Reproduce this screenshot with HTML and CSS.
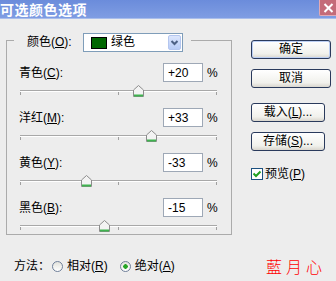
FILE: index.html
```html
<!DOCTYPE html>
<html lang="zh-CN">
<head>
  <meta charset="UTF-8">
  <meta name="viewport" content="width=device-width, initial-scale=1.0">
  <title>可选颜色选项</title>
  <link rel="stylesheet" href="styles.css">
</head>
<body>

  <div class="window">
    <div class="titlebar">
      <span class="title">可选颜色选项</span>
      <span class="close">
        <svg width="15" height="14" viewBox="0 0 15 14"><path d="M3.5 3 L11.5 11 M11.5 3 L3.5 11" stroke="#fff" stroke-width="2"/></svg>
      </span>
    </div>

    <div class="main">
      <!-- 颜色分组 -->
      <fieldset class="group">
        <legend class="group-head">
          <span class="head-label">颜色(<u>O</u>):</span>
          <div class="combo">
            <span class="swatch"></span>
            <span class="combo-text">绿色</span>
            <span class="combo-btn">
              <svg width="11" height="13" viewBox="0 0 11 13"><path d="M2.5 5 L5.5 8 L8.5 5" fill="none" stroke="#4d6185" stroke-width="2"/></svg>
            </span>
          </div>
        </legend>

        <div class="rows">
          <div class="row">
            <div class="line"><span class="name">青色(<u>C</u>):</span><input class="val" type="text" value="+20"><span class="pct">%</span></div>
            <div class="slider">
              <div class="track"></div><div class="ticks"></div>
              <span class="thumb" style="left: 60%"><svg width="11" height="12" viewBox="0 0 11 12"><path d="M0.5 11.5 V5 L5.5 0.5 L10.5 5 V11.5 Z" fill="#f3f3f3" stroke="#8c8c8c"/><path d="M1 10.5 H10" stroke="#3fb34f" stroke-width="2"/></svg></span>
            </div>
          </div>
          <div class="row">
            <div class="line"><span class="name">洋红(<u>M</u>):</span><input class="val" type="text" value="+33"><span class="pct">%</span></div>
            <div class="slider">
              <div class="track"></div><div class="ticks"></div>
              <span class="thumb" style="left: 66.5%"><svg width="11" height="12" viewBox="0 0 11 12"><path d="M0.5 11.5 V5 L5.5 0.5 L10.5 5 V11.5 Z" fill="#f3f3f3" stroke="#8c8c8c"/><path d="M1 10.5 H10" stroke="#3fb34f" stroke-width="2"/></svg></span>
            </div>
          </div>
          <div class="row">
            <div class="line"><span class="name">黄色(<u>Y</u>):</span><input class="val" type="text" value="-33"><span class="pct">%</span></div>
            <div class="slider">
              <div class="track"></div><div class="ticks"></div>
              <span class="thumb" style="left: 33.5%"><svg width="11" height="12" viewBox="0 0 11 12"><path d="M0.5 11.5 V5 L5.5 0.5 L10.5 5 V11.5 Z" fill="#f3f3f3" stroke="#8c8c8c"/><path d="M1 10.5 H10" stroke="#3fb34f" stroke-width="2"/></svg></span>
            </div>
          </div>
          <div class="row">
            <div class="line"><span class="name">黑色(<u>B</u>):</span><input class="val" type="text" value="-15"><span class="pct">%</span></div>
            <div class="slider">
              <div class="track"></div><div class="ticks"></div>
              <span class="thumb" style="left: 42.5%"><svg width="11" height="12" viewBox="0 0 11 12"><path d="M0.5 11.5 V5 L5.5 0.5 L10.5 5 V11.5 Z" fill="#f3f3f3" stroke="#8c8c8c"/><path d="M1 10.5 H10" stroke="#3fb34f" stroke-width="2"/></svg></span>
            </div>
          </div>
        </div>
      </fieldset>

      <!-- 按钮 -->
      <div class="side">
        <button class="btn default">确定</button>
        <button class="btn cancel">取消</button>
        <button class="btn small">载入(<u>L</u>)...</button>
        <button class="btn small store">存储(<u>S</u>)...</button>
        <label class="preview">
          <span class="check"><svg width="10" height="10" viewBox="0 0 10 10"><path d="M1.5 4.5 L4 7 L8.5 2.5" fill="none" stroke="#21a121" stroke-width="2"/></svg></span>
          <span>预览(<u>P</u>)</span>
        </label>
      </div>
    </div>

    <!-- 方法 -->
    <div class="method">
      <span class="method-label">方法：</span>
      <span class="opt"><span class="radio"></span><span>相对(<u>R</u>)</span></span>
      <span class="opt second"><span class="radio on"></span><span>绝对(<u>A</u>)</span></span>
      <span class="sign">藍月心</span>
    </div>
  </div>

</body>
</html>
```

FILE: styles.css
```css
* {
  box-sizing: border-box;
}

body {
  margin: 0;
  background: #ededed;
  font-family: "Liberation Sans", "Noto Sans CJK SC", sans-serif;
  font-size: 12px;
  line-height: 16px;
  color: #000;
}

u {
  text-underline-offset: 1px;
}

.window {
  width: 336px;
  height: 281px;
  overflow: hidden;
  display: flex;
  flex-direction: column;
}

.titlebar {
  height: 19px;
  display: flex;
  justify-content: space-between;
  background: linear-gradient(#6b8cdb, #7f9de3);
  border-bottom: 1px solid #a9bdeb;
}

.title {
  margin-left: 0;
  color: #fff;
  font-family: "Noto Sans CJK SC", sans-serif;
  font-size: 14px;
  font-weight: bold;
  line-height: 18px;
  letter-spacing: 0.5px;
}

.close {
  width: 17px;
  height: 16px;
  display: flex;
  align-items: center;
  justify-content: center;
  background: #c46b79;
  border: 1px solid #e2aab4;
  border-top: none;
  border-right: none;
  border-radius: 0 0 0 2px;
}

.main {
  display: flex;
  padding: 14px 0 0 6px;
}

/* group box */
.group {
  margin: 0;
  width: 226px;
  min-width: 0;
  padding: 15px 12px 0 12px;
  border: 1px solid #ababab;
}

.group-head {
  display: flex;
  align-items: flex-start;
  height: 15px;
  margin-left: -5px;
  padding: 0 8px 0 13px;
}

.head-label {
  width: 56px;
  line-height: 19px;
}

.combo {
  width: 100px;
  height: 19px;
  display: flex;
  align-items: center;
  background: #fff;
  border: 1px solid #7f9db9;
}

.swatch {
  width: 16px;
  height: 12px;
  margin-left: 7px;
  background: #006600;
  border: 1px solid #000;
}

.combo-text {
  margin-left: 4px;
  line-height: 17px;
}

.combo-btn {
  width: 13px;
  height: 15px;
  margin-left: auto;
  margin-right: 1px;
  display: flex;
  align-items: center;
  justify-content: center;
  background: linear-gradient(#dce6fd, #b8ccf6);
  border: 1px solid #b4c6ef;
  border-radius: 2px;
}

.rows {
  display: flex;
  flex-direction: column;
  gap: 9px;
}

.line {
  height: 19px;
  display: flex;
  align-items: center;
}

.name {
  flex: 1;
}

.val {
  width: 40px;
  height: 19px;
  margin: 0;
  padding: 0 0 0 4px;
  border: 1px solid #9ea8b6;
  background: #fff;
  font: inherit;
  color: #000;
}

.pct {
  margin-left: 4px;
  width: 12px;
}

/* slider */
.slider {
  position: relative;
  width: 197px;
  height: 17px;
  margin-left: 1px;
  padding-top: 8px;
}

.track {
  height: 2px;
  border-top: 1px solid #a8a8a8;
  border-bottom: 1px solid #fff;
}

.ticks {
  height: 3px;
  background:
    linear-gradient(#a0a0a0, #a0a0a0) 0 0 / 1px 100% no-repeat,
    linear-gradient(#a0a0a0, #a0a0a0) 50% 0 / 1px 100% no-repeat,
    linear-gradient(#a0a0a0, #a0a0a0) 100% 0 / 1px 100% no-repeat;
}

.thumb {
  position: absolute;
  top: 3px;
  width: 11px;
  height: 12px;
  margin-left: -5px;
  display: block;
}

.thumb svg {
  display: block;
}

/* buttons */
.side {
  margin-left: 19px;
  padding-top: 7px;
  display: flex;
  flex-direction: column;
  align-items: flex-start;
}

.btn {
  width: 80px;
  height: 19px;
  margin: 0 0 10px 0;
  padding: 0;
  border: 1px solid #2a3a5c;
  border-radius: 3px;
  background: linear-gradient(#ffffff, #f1f1ec 75%, #d9d6ce);
  font: inherit;
  line-height: 17px;
  color: #000;
  text-align: center;
}

.btn.default {
  box-shadow: inset 0 0 0 1px #bccff3;
}

.btn.cancel {
  margin-bottom: 15px;
}

.btn.small {
  width: 74px;
}

.btn.store {
  margin-bottom: 16px;
}

.preview {
  display: flex;
  align-items: center;
  gap: 2px;
  height: 13px;
}

.check {
  width: 12px;
  height: 12px;
  display: flex;
  align-items: center;
  justify-content: center;
  background: #fff;
  border: 1px solid #1c5180;
}

/* method row */
.method {
  margin-top: 23px;
  height: 16px;
  padding-left: 14px;
  display: flex;
  align-items: center;
}

.method-label {
  width: 38px;
}

.opt {
  display: flex;
  align-items: center;
  gap: 4px;
}

.opt.second {
  margin-left: 12px;
}

.radio {
  width: 11px;
  height: 11px;
  border: 1px solid #6f7f99;
  border-radius: 50%;
  background: linear-gradient(#e2e2dc, #ffffff);
}

.radio.on {
  background:
    radial-gradient(circle, #25a525 0 2px, transparent 2.5px),
    linear-gradient(#e2e2dc, #ffffff);
}

.sign {
  margin-left: auto;
  margin-right: 10px;
  font-family: "Noto Sans CJK TC", sans-serif;
  font-weight: 300;
  font-size: 16px;
  letter-spacing: 4px;
  color: #f00;
}
```
